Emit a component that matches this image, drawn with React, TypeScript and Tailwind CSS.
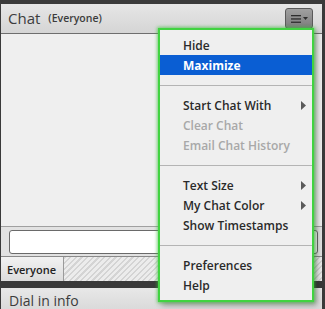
import React from "react";

const font = { fontFamily: '"Open Sans", "DejaVu Sans", sans-serif' };

function Arrow() {
  return (
    <svg width="5" height="9" viewBox="0 0 5 9" className="absolute right-[6px] top-[6px]">
      <path d="M0 0 L5 4.5 L0 9 Z" fill="#5a5a5a" />
    </svg>
  );
}

function Item({ label, arrow, disabled, active }: { label: string; arrow?: boolean; disabled?: boolean; active?: boolean }) {
  return (
    <div
      className={
        "relative h-[20px] pl-[23px] pt-[1px] flex items-center text-[12px] leading-none " +
        (active ? "bg-[#0a5ed3] text-white font-bold" : disabled ? "text-[#a8a8a8] font-semibold" : "text-[#2a2a2a] font-semibold")
      }
    >
      {label}
      {arrow && <Arrow />}
    </div>
  );
}

function Sep() {
  return (
    <div className="h-[20px] flex items-center">
      <div className="h-px w-full bg-[#b4b4b4]" />
    </div>
  );
}

export default function App() {
  return (
    <div className="relative w-[325px] h-[309px] overflow-hidden bg-[#3a3a3a] pt-[4px] pl-px pr-[3px] flex flex-col" style={font}>
      <div className="h-[277px] flex flex-col bg-[#efefef]">
        <div className="h-[30px] flex items-center pl-[7px] bg-gradient-to-b from-[#e6e6e6] to-[#d5d5d5] border-b border-[#6e6e6e]">
          <span className="text-[15px] text-[#3c3c3c]">Chat</span>
          <span className="ml-[8px] text-[10.5px] font-semibold text-[#3c3c3c]">(Everyone)</span>
        </div>
        <div className="flex-1 bg-[#efefef] border-b border-[#a0a0a0]" />
        <div className="h-[30px] bg-[#e2e2e2] flex items-center pl-[8px] pr-[4px] border-b border-[#8a8a8a]">
          <div className="h-[24px] w-full rounded-[3px] border border-[#6a6a6a] bg-white" />
        </div>
        <div className="h-[24px] flex">
          <div className="w-[63px] flex items-center pl-[6px] pt-[3px] text-[11px] text-[#222] font-semibold bg-gradient-to-b from-[#f2f2f2] to-[#dcdcdc] border-r border-[#9a9a9a]">
            Everyone
          </div>
          <div className="flex-1 bg-[repeating-linear-gradient(135deg,#d4d4d4_0px,#d4d4d4_1.5px,#ececec_1.5px,#ececec_4px)]" />
        </div>
      </div>
      <div className="h-[7px]" />
      <div className="flex-1 bg-gradient-to-b from-[#e8e8e8] to-[#dadada] flex items-start pl-[8px] pt-[6px]">
        <span className="text-[14px] leading-none text-[#3c3c3c]">Dial in info</span>
      </div>

      <div className="absolute left-[285px] top-[8px] w-[28px] h-[21px] rounded-[3px] border border-[#5a5a5a] bg-gradient-to-b from-[#a0a0a0] to-[#7c7c7c] flex items-center justify-center gap-[2px]">
        <svg width="10" height="8" viewBox="0 0 10 8">
          <rect x="0" y="0" width="10" height="1.3" fill="#2e2e2e" />
          <rect x="0" y="3.3" width="10" height="1.3" fill="#2e2e2e" />
          <rect x="0" y="6.6" width="10" height="1.3" fill="#2e2e2e" />
        </svg>
        <svg width="5" height="3" viewBox="0 0 5 3">
          <path d="M0 0 L5 0 L2.5 3 Z" fill="#2e2e2e" />
        </svg>
      </div>

      <div className="absolute left-[158px] top-[28px] w-[156px] h-[274px] border-2 border-[#41d341] bg-[#efefef] shadow-[0_0_3px_1px_rgba(60,200,60,0.6),3px_3px_6px_rgba(0,0,0,0.35)] pt-[5px]">
        <Item label="Hide" />
        <Item label="Maximize" active />
        <Sep />
        <Item label="Start Chat With" arrow />
        <Item label="Clear Chat" disabled />
        <Item label="Email Chat History" disabled />
        <Sep />
        <Item label="Text Size" arrow />
        <Item label="My Chat Color" arrow />
        <Item label="Show Timestamps" />
        <Sep />
        <Item label="Preferences" />
        <Item label="Help" />
      </div>
    </div>
  );
}
